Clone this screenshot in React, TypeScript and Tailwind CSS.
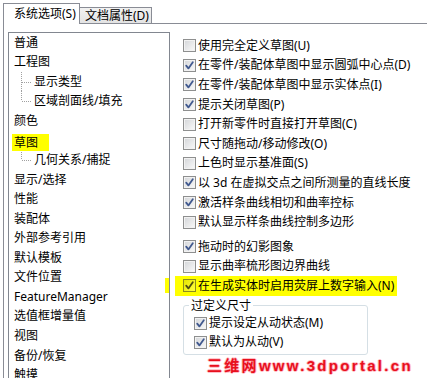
import React from 'react';

type TreeItem = { label: string; child?: 'mid' | 'last'; mark?: boolean };

const tree: TreeItem[] = [
  { label: '普通' },
  { label: '工程图' },
  { label: '显示类型', child: 'mid' },
  { label: '区域剖面线/填充', child: 'last' },
  { label: '颜色' },
  { label: '草图', mark: true },
  { label: '几何关系/捕捉', child: 'last' },
  { label: '显示/选择' },
  { label: '性能' },
  { label: '装配体' },
  { label: '外部参考引用' },
  { label: '默认模板' },
  { label: '文件位置' },
  { label: 'FeatureManager' },
  { label: '选值框增量值' },
  { label: '视图' },
  { label: '备份/恢复' },
  { label: '触摸' },
];

const topOptions: [string, boolean][] = [
  ['使用完全定义草图(U)', false],
  ['在零件/装配体草图中显示圆弧中心点(D)', true],
  ['在零件/装配体草图中显示实体点(I)', true],
  ['提示关闭草图(P)', true],
  ['打开新零件时直接打开草图(C)', false],
  ['尺寸随拖动/移动修改(O)', false],
  ['上色时显示基准面(S)', false],
  ['以 3d 在虚拟交点之间所测量的直线长度', true],
  ['激活样条曲线相切和曲率控标', true],
  ['默认显示样条曲线控制多边形', false],
];

const TreeLine = ({ last }: { last: boolean }) => (
  <svg width="12" height="20" className="shrink-0" viewBox="0 0 12 20">
    <line x1="0.5" y1="0" x2="0.5" y2={last ? 10 : 20} stroke="#a0a0a0" strokeDasharray="1 1" />
    <line x1="1" y1="10.5" x2="11" y2="10.5" stroke="#a0a0a0" strokeDasharray="1 1" />
  </svg>
);

const Box = ({ checked, marked }: { checked?: boolean; marked?: boolean }) => (
  <span
    className={`flex h-[13px] w-[13px] shrink-0 items-center justify-center border ${
      marked
        ? 'border-[#8c8c20] bg-[linear-gradient(135deg,#e6e600,#ffff40)]'
        : 'border-[#8e8f8f] bg-[linear-gradient(135deg,#d3d5d8,#fafafa)] shadow-[inset_0_0_0_1px_#f2f2f2]'
    }`}
  >
    {checked && (
      <svg width="11" height="11" viewBox="0 0 11 11">
        <path
          d="M2.2 5.6 L4.4 8.4 L8.8 2.2"
          fill="none"
          stroke={marked ? '#4d4d10' : '#41598f'}
          strokeWidth="1.8"
          strokeLinecap="round"
          strokeLinejoin="round"
        />
      </svg>
    )}
  </span>
);

const Option = ({ label, checked, marked }: { label: string; checked?: boolean; marked?: boolean }) => (
  <div
    className={`flex h-[19.6px] items-center gap-[2px] leading-none ${
      marked ? '-ml-[8px] w-[222px] bg-[#ffff00] pl-[8px]' : ''
    }`}
  >
    <Box checked={checked} marked={marked} />
    <span className="whitespace-nowrap">{label}</span>
  </div>
);

export default function App() {
  return (
    <div className="h-[378px] w-[427px] overflow-hidden bg-white text-[12px] text-black font-['Noto_Sans','Noto_Sans_CJK_SC',sans-serif]">
      {/* tabs */}
      <div className="flex h-[24px] items-end">
        <div className="w-[3px] shrink-0" />
        <div className="flex h-[21px] w-[77px] shrink-0 items-center border-l border-r border-t border-[#898c95] bg-white pl-[10px] leading-none">
          系统选项(S)
        </div>
        <div className="flex h-[17px] w-[72px] shrink-0 items-center border-b border-r border-t border-[#898c95] bg-[linear-gradient(#f2f2f2,#e3e3e3)] pl-[5px] leading-none">
          文档属性(D)
        </div>
        <div className="h-[1px] flex-1 bg-[#898c95]" />
      </div>

      {/* body */}
      <div className="ml-[3px] flex h-[354px] border-l border-[#898c95]">
        {/* tree */}
        <div className="relative ml-[4px] mt-[8px] h-[400px] w-[162px] shrink-0 border border-[#828790] pl-[5px]">
          {tree.map((t) => (
            <div key={t.label} className="flex h-[19.56px] items-center leading-none">
              {t.child && (
                <>
                  <span className="w-[7px] shrink-0" />
                  <TreeLine last={t.child === 'last'} />
                  <span className="w-[1px] shrink-0" />
                </>
              )}
              {t.mark ? (
                <span className="-ml-[2px] flex h-[17px] translate-y-[2px] items-center bg-[#ffff00] pl-[2px] pr-[11px]">
                  {t.label}
                </span>
              ) : (
                <span className="whitespace-nowrap">{t.label}</span>
              )}
            </div>
          ))}
          <div className="absolute right-0 top-[245px] h-[15px] w-[4px] bg-[#ffff00]" />
        </div>

        {/* options */}
        <div className="ml-[5px] mt-[12px] flex flex-col pl-[8px]">
          {topOptions.map(([l, c]) => (
            <Option key={l} label={l} checked={c} />
          ))}
          <div className="h-[5px]" />
          <Option label="拖动时的幻影图象" checked />
          <Option label="显示曲率梳形图边界曲线" />
          <Option label="在生成实体时启用荧屏上数字输入(N)" checked marked />

          <fieldset className="mt-[2px] w-[185px] rounded-[3px] border border-[#d5dfe5] px-[10px] pb-[2px]">
            <legend className="-ml-[5px] px-[2px] leading-4">过定义尺寸</legend>
            <div className="flex h-[19px] items-center gap-[2px] leading-none">
              <Box checked />
              <span>提示设定从动状态(M)</span>
            </div>
            <div className="flex h-[19px] items-center gap-[2px] leading-none">
              <Box checked />
              <span>默认为从动(V)</span>
            </div>
          </fieldset>

          <div className="ml-[24px] mt-[1px] flex h-[20px] items-center whitespace-nowrap text-[15px] font-bold leading-none tracking-[2.3px] text-[#e8101e] [text-shadow:0_0_1px_#ff9aa6,1px_0_0_#ffc4cc,-1px_0_0_#ffc4cc,0_1px_0_#ffc4cc,0_-1px_0_#ffc4cc] font-['Liberation_Sans','Noto_Sans_CJK_SC',sans-serif]">
            三维网www.3dportal.cn
          </div>
        </div>
      </div>
    </div>
  );
}
